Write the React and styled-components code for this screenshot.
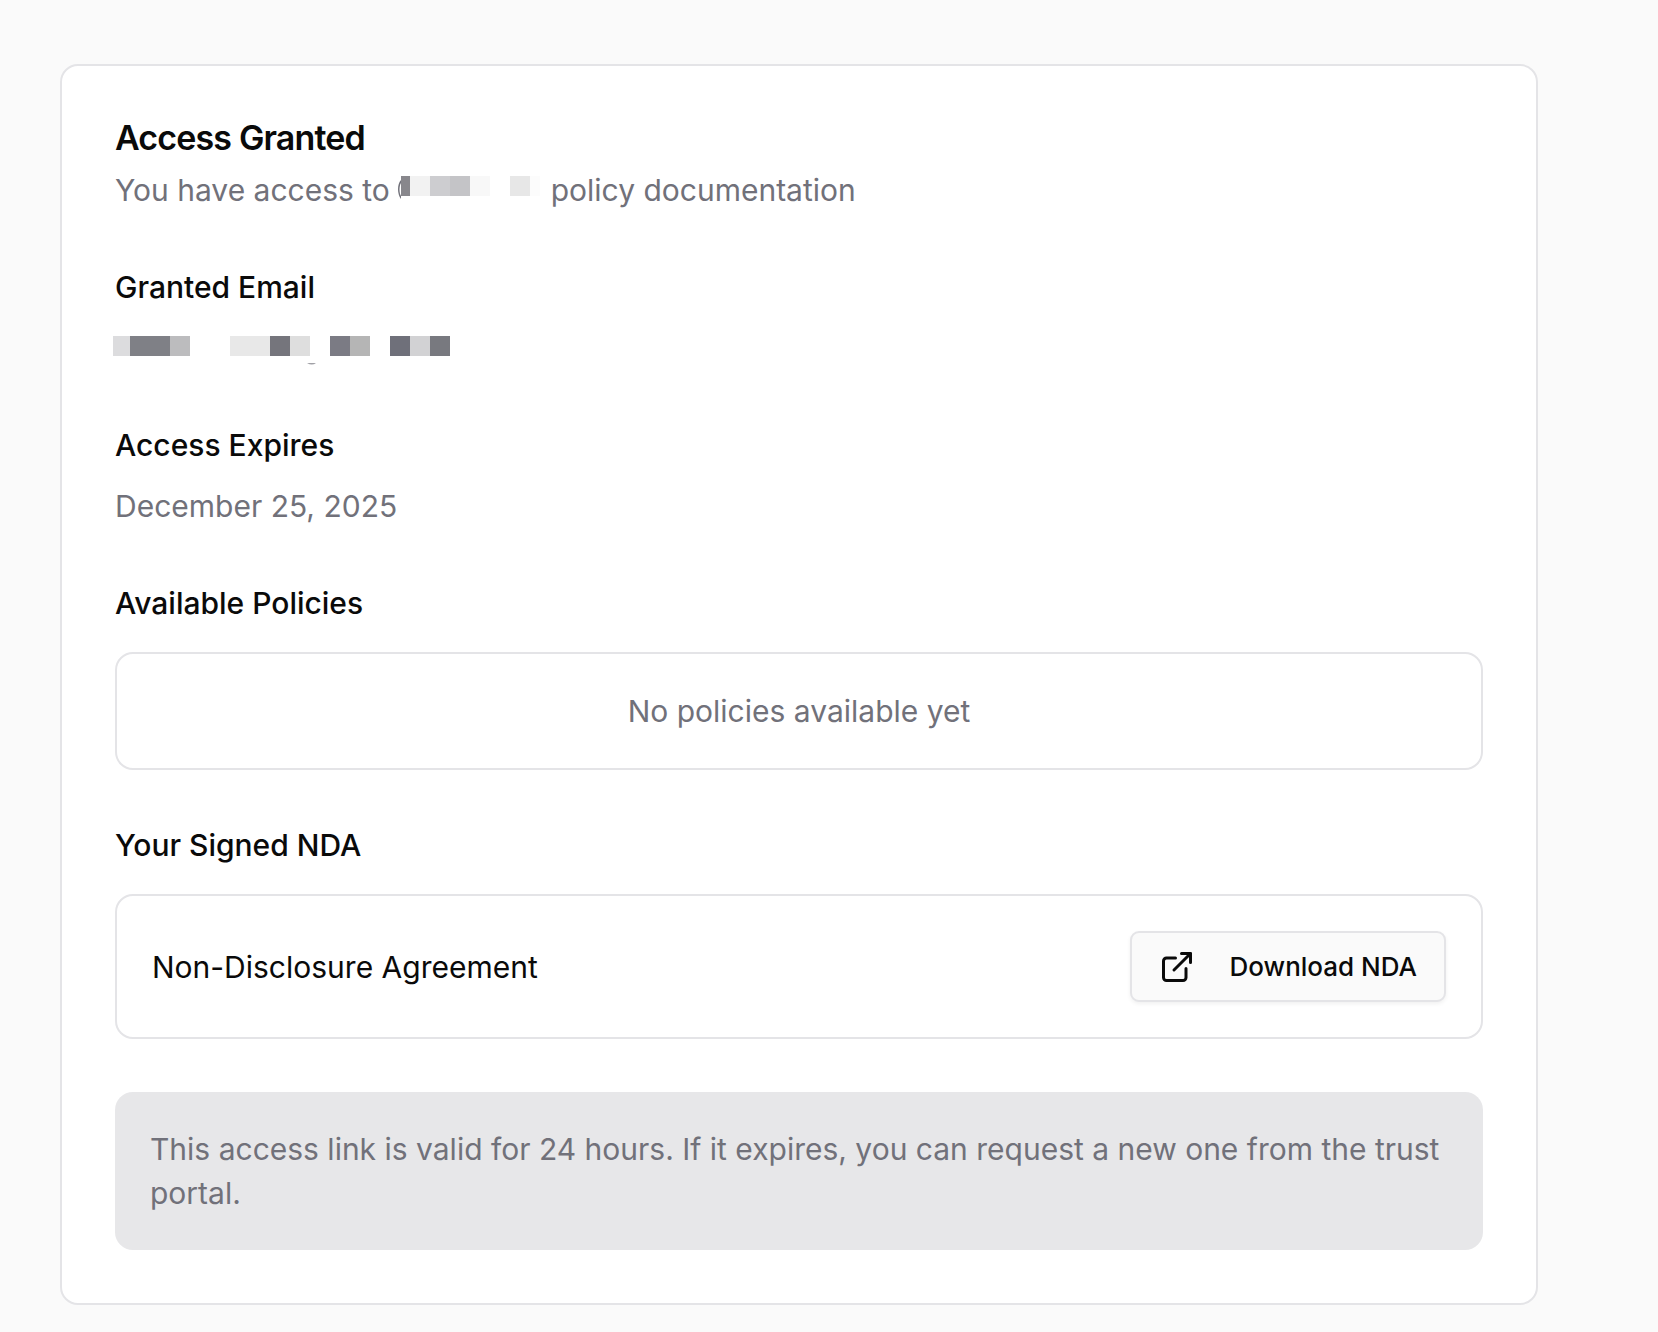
import React from "react";
import styled, { createGlobalStyle } from "styled-components";
import { ExternalLink } from "lucide-react";

const GlobalStyle = createGlobalStyle`
  * {
    box-sizing: border-box;
  }

  body {
    margin: 0;
    background-color: #fafafa;
    color: #0a0a0a;
    font-family: Inter, "Liberation Sans", sans-serif;
    font-size: 30px;
    line-height: 44px;
  }
`;

const Page = styled.main`
  padding: 64px 120px 28px 60px;
`;

const Card = styled.section`
  display: flex;
  flex-direction: column;
  gap: 53px;
  padding: 53px;
  background-color: #fff;
  border: 2px solid #e4e4e7;
  border-radius: 18px;
`;

const CardHeader = styled.header`
  display: flex;
  flex-direction: column;
  gap: 11px;
`;

const Title = styled.h1`
  margin: 0;
  font-size: 34px;
  font-weight: 600;
  line-height: 38px;
  letter-spacing: -0.025em;
`;

const Text = styled.p`
  margin: 0;
  color: ${({ $muted }) => ($muted ? "#71717a" : "inherit")};
`;

const Field = styled.div`
  display: flex;
  flex-direction: column;
  gap: ${({ $boxed }) => ($boxed ? "27px" : "17px")};
`;

const Label = styled.h2`
  margin: 0;
  font-size: 30px;
  font-weight: 500;
  line-height: 44px;
`;

const Box = styled.div`
  display: flex;
  align-items: center;
  justify-content: ${({ $center }) => ($center ? "center" : "space-between")};
  padding: 35px;
  border: 2px solid #e4e4e7;
  border-radius: 18px;
`;

const Notice = styled.div`
  padding: 35px;
  background-color: #e7e7e9;
  border-radius: 18px;
`;

const DownloadButton = styled.button`
  display: flex;
  align-items: center;
  gap: 35px;
  padding: 15px 27px;
  background-color: #fafafa;
  border: 2px solid #e4e4e7;
  border-radius: 9px;
  box-shadow: 0 2px 4px rgba(0, 0, 0, 0.06);
  color: inherit;
  font-family: inherit;
  font-size: 26px;
  font-weight: 500;
  line-height: 37px;
  cursor: pointer;
`;

const Mosaic = styled.svg`
  display: inline-block;
  overflow: visible;
  vertical-align: top;
`;

// [x, width, colour] of each redacted block
const companyBlocks = [
  [3, 9, "#88878c"],
  [12, 20, "#f2f2f2"],
  [32, 20, "#cdcdd0"],
  [52, 20, "#c4c4c7"],
  [72, 20, "#f8f8f8"],
  [112, 20, "#e7e7e7"],
  [132, 10, "#fcfcfc"],
];

const emailBlocks = [
  [-2, 17, "#dcdcde"],
  [15, 40, "#7f8086"],
  [55, 20, "#bcbcbe"],
  [115, 40, "#e8e8e8"],
  [155, 20, "#75757c"],
  [175, 20, "#dedede"],
  [215, 20, "#7b7b84"],
  [235, 20, "#b5b5b5"],
  [275, 20, "#6f707a"],
  [295, 20, "#d2d2d4"],
  [315, 20, "#78797f"],
];

const Blocks = ({ blocks, y }) =>
  blocks.map(([x, width, fill]) => (
    <rect key={x} x={x} y={y} width={width} height="20" fill={fill} />
  ));

const App = () => {
  return (
    <>
      <GlobalStyle />
      <Page>
        <Card>
          <CardHeader>
            <Title>Access Granted</Title>
            <Text $muted>
              You have access to{" "}
              <Mosaic width="144" height="44" aria-hidden="true">
                <path d="M3 12C-1 16-1 26 3 31V28C1 25 1 18 3 15Z" fill="#71717a" />
                <Blocks blocks={companyBlocks} y="8" />
              </Mosaic>{" "}
              policy documentation
            </Text>
          </CardHeader>

          <Field>
            <Label>Granted Email</Label>
            <Text $muted>
              <Mosaic width="336" height="44" aria-hidden="true">
                <Blocks blocks={emailBlocks} y="10" />
                <path d="M192 37h9q-4 3-9 0Z" fill="#a1a1a6" />
              </Mosaic>
            </Text>
          </Field>

          <Field>
            <Label>Access Expires</Label>
            <Text $muted>December 25, 2025</Text>
          </Field>

          <Field $boxed>
            <Label>Available Policies</Label>
            <Box $center>
              <Text $muted>No policies available yet</Text>
            </Box>
          </Field>

          <Field $boxed>
            <Label>Your Signed NDA</Label>
            <Box>
              <Text>Non-Disclosure Agreement</Text>
              <DownloadButton type="button">
                <ExternalLink size={36} strokeWidth={2} aria-hidden="true" />
                Download NDA
              </DownloadButton>
            </Box>
          </Field>

          <Notice>
            <Text $muted>
              This access link is valid for 24 hours. If it expires, you can request a new one from
              the trust portal.
            </Text>
          </Notice>
        </Card>
      </Page>
    </>
  );
};

export default App;
